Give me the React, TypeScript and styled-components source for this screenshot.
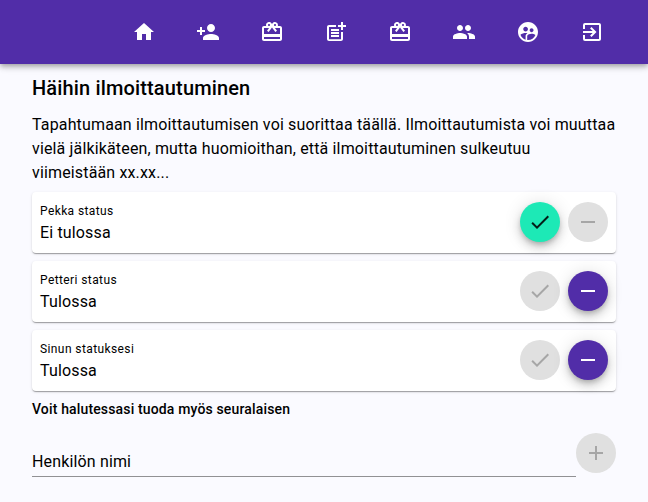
import React from 'react';
import styled, { createGlobalStyle } from 'styled-components';
import {
  MdAdd,
  MdCheck,
  MdHome,
  MdOutlineCardGiftcard,
  MdOutlineExitToApp,
  MdPeople,
  MdPersonAdd,
  MdPostAdd,
  MdRemove,
  MdSupervisedUserCircle,
} from 'react-icons/md';

const GlobalStyle = createGlobalStyle`
  html, body {
    margin: 0;
    height: 100%;
    overflow: hidden;
    background-color: #fafaff;
    font-family: Roboto, "Liberation Sans", sans-serif;
    color: #000;
  }
`;

const AppBar = styled.header`
  display: flex;
  justify-content: flex-end;
  align-items: center;
  height: 64px;
  padding-right: 24px;
  background-color: #512da8;
  box-shadow: 0 2px 4px -1px rgba(0, 0, 0, 0.2), 0 4px 5px 0 rgba(0, 0, 0, 0.14),
    0 1px 10px 0 rgba(0, 0, 0, 0.12);
`;

const NavItem = styled.div`
  display: flex;
  justify-content: center;
  width: 64px;
  color: #fff;
`;

const Content = styled.main`
  padding: 12px 32px 0;
`;

const Title = styled.h2`
  margin: 0;
  font-size: 20px;
  font-weight: 500;
  line-height: 24px;
  letter-spacing: 0.0075em;
`;

const Intro = styled.p`
  margin: 13px 0 7px;
  font-size: 16px;
  line-height: 24px;
  letter-spacing: 0.00938em;
`;

const StatusCard = styled.section`
  display: flex;
  align-items: flex-start;
  justify-content: space-between;
  box-sizing: border-box;
  height: 61px;
  margin-bottom: 8px;
  padding: 10px 8px 11px;
  background-color: #fff;
  border-radius: 4px;
  box-shadow: 0 2px 1px -1px rgba(0, 0, 0, 0.2), 0 1px 1px 0 rgba(0, 0, 0, 0.14),
    0 1px 3px 0 rgba(0, 0, 0, 0.12);
`;

const StatusLabel = styled.div`
  margin-top: 2px;
  font-size: 12px;
  line-height: 14px;
  letter-spacing: 0.03333em;
`;

const StatusValue = styled.div`
  margin-top: 3px;
  font-size: 16px;
  line-height: 24px;
  letter-spacing: 0.00938em;
`;

const Actions = styled.div`
  display: flex;
  gap: 8px;
`;

const variants = {
  accept: { bg: '#1de9b6', fg: 'rgba(0, 0, 0, 0.87)' },
  decline: { bg: '#512da8', fg: '#fff' },
  off: { bg: '#e0e0e0', fg: 'rgba(0, 0, 0, 0.26)' },
};

const Fab = styled.button<{ $variant: keyof typeof variants }>`
  display: flex;
  align-items: center;
  justify-content: center;
  flex-shrink: 0;
  width: 40px;
  height: 40px;
  padding: 0;
  border: none;
  border-radius: 50%;
  background-color: ${props => variants[props.$variant].bg};
  color: ${props => variants[props.$variant].fg};
  box-shadow: ${props =>
    props.$variant === 'off'
      ? 'none'
      : '0 3px 5px -1px rgba(0,0,0,0.2), 0 6px 10px 0 rgba(0,0,0,0.14), 0 1px 18px 0 rgba(0,0,0,0.12)'};
`;

const CompanionHint = styled.div`
  margin-top: 10px;
  font-size: 14px;
  font-weight: 500;
  line-height: 16px;
  letter-spacing: 0.01071em;
`;

const CompanionRow = styled.div`
  display: flex;
  align-items: flex-start;
  margin-top: 16px;
`;

const NameField = styled.div`
  flex: 1;
  box-sizing: border-box;
  height: 44px;
  padding-top: 16px;
  border-bottom: 1px solid rgba(0, 0, 0, 0.42);
  font-size: 16px;
  line-height: 26px;
  letter-spacing: 0.00938em;
`;

const people = [
  { label: 'Pekka status', value: 'Ei tulossa', coming: false },
  { label: 'Petteri status', value: 'Tulossa', coming: true },
  { label: 'Sinun statuksesi', value: 'Tulossa', coming: true },
];

const navIcons = [
  MdHome,
  MdPersonAdd,
  MdOutlineCardGiftcard,
  MdPostAdd,
  MdOutlineCardGiftcard,
  MdPeople,
  MdSupervisedUserCircle,
  MdOutlineExitToApp,
];

export default function App() {
  return (
    <>
      <GlobalStyle />
      <AppBar>
        {navIcons.map((Icon, i) => (
          <NavItem key={i}>
            <Icon size={24} />
          </NavItem>
        ))}
      </AppBar>
      <Content>
        <Title>Häihin ilmoittautuminen</Title>
        <Intro>
          Tapahtumaan ilmoittautumisen voi suorittaa täällä. Ilmoittautumista voi muuttaa vielä
          jälkikäteen, mutta huomioithan, että ilmoittautuminen sulkeutuu viimeistään xx.xx...
        </Intro>
        {people.map(person => (
          <StatusCard key={person.label}>
            <div>
              <StatusLabel>{person.label}</StatusLabel>
              <StatusValue>{person.value}</StatusValue>
            </div>
            <Actions>
              <Fab $variant={person.coming ? 'off' : 'accept'}>
                <MdCheck size={24} />
              </Fab>
              <Fab $variant={person.coming ? 'decline' : 'off'}>
                <MdRemove size={24} />
              </Fab>
            </Actions>
          </StatusCard>
        ))}
        <CompanionHint>Voit halutessasi tuoda myös seuralaisen</CompanionHint>
        <CompanionRow>
          <NameField>Henkilön nimi</NameField>
          <Fab $variant="off">
            <MdAdd size={24} />
          </Fab>
        </CompanionRow>
      </Content>
    </>
  );
}
